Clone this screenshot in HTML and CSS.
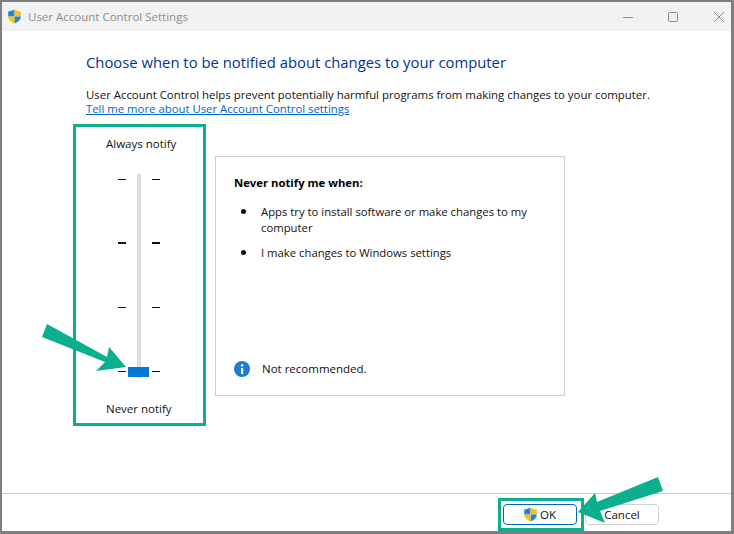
FILE: index.html
```html
<!DOCTYPE html>
<html lang="en">
<head>
<meta charset="utf-8">
<title>User Account Control Settings</title>
<link rel="stylesheet" href="styles.css">
</head>
<body>
<div class="window">
  <header class="titlebar">
    <svg class="shield title-shield" viewBox="0 0 16 16"><path d="M8 .6C6 1.900 4 2.500 1.300 2.600V8H8z" fill="#1c86d8"/><path d="M8 .6c2 1.300 4 1.900 6.700 2V8H8z" fill="#f6c21c"/><path d="M8 8h6.700c0 3.500-3 6-6.700 7.500z" fill="#1c86d8"/><path d="M1.300 8H8v7.500C4.300 14 1.300 11.500 1.300 8z" fill="#f6c21c"/></svg>
    <span class="title">User Account Control Settings</span>
    <div class="controls">
      <svg class="ctl" viewBox="0 0 10 10"><path d="M0 5.500h10" stroke="#8a8a8a" fill="none"/></svg>
      <svg class="ctl" viewBox="0 0 10 10"><rect x=".5" y=".5" width="9" height="9" rx="1" stroke="#8a8a8a" fill="none"/></svg>
      <svg class="ctl" viewBox="0 0 10 10"><path d="M0 0l10 10M10 0L0 10" stroke="#8a8a8a" fill="none"/></svg>
    </div>
  </header>
  <main class="content">
    <h1 class="heading">Choose when to be notified about changes to your computer</h1>
    <p class="intro">User Account Control helps prevent potentially harmful programs from making changes to your computer.</p>
    <a class="more" href="#">Tell me more about User Account Control settings</a>
    <div class="panels">
      <section class="slider-frame">
        <div class="slider-label">Always notify</div>
        <div class="slider">
          <div class="track"></div>
          <div class="ticks"><i></i><i></i></div>
          <div class="ticks bold"><i></i><i></i></div>
          <div class="ticks"><i></i><i></i></div>
          <div class="ticks"><i></i><i></i></div>
          <div class="thumb"></div>
        </div>
        <div class="slider-label">Never notify</div>
      </section>
      <section class="info">
        <h2 class="info-title">Never notify me when:</h2>
        <ul class="info-list">
          <li>Apps try to install software or make changes to my computer</li>
          <li>I make changes to Windows settings</li>
        </ul>
        <div class="note">
          <svg class="note-icon" viewBox="0 0 16 16"><circle cx="8" cy="8" r="8" fill="#1a7fd4"/><rect x="7" y="7" width="2.200" height="6" fill="#fff"/><rect x="7" y="3.300" width="2.200" height="2.200" fill="#fff"/></svg>
          <span>Not recommended.</span>
        </div>
      </section>
    </div>
  </main>
  <footer class="footer">
    <div class="ok-frame">
      <button class="btn ok" type="button">
        <svg class="shield" viewBox="0 0 16 16"><path d="M8 .6C6 1.900 4 2.500 1.300 2.600V8H8z" fill="#1c86d8"/><path d="M8 .6c2 1.300 4 1.900 6.700 2V8H8z" fill="#f6c21c"/><path d="M8 8h6.700c0 3.500-3 6-6.700 7.500z" fill="#1c86d8"/><path d="M1.300 8H8v7.500C4.300 14 1.300 11.500 1.300 8z" fill="#f6c21c"/></svg>
        <span>OK</span>
      </button>
    </div>
    <button class="btn cancel" type="button">Cancel</button>
  </footer>
  <svg class="arrow arrow-slider" viewBox="0 0 90 55"><path d="M7 4L67 37 69 27 86 47 56 51 65 42 2 17z" fill="#0bae8d"/></svg>
  <svg class="arrow arrow-ok" viewBox="0 0 90 52"><path d="M83 3L88 17 25 37 30 49 3 38 20 19 22 28z" fill="#0bae8d"/></svg>
</div>
</body>
</html>
```
FILE: styles.css
```css
* { box-sizing: border-box; }
html, body { margin: 0; padding: 0; }
body { width: 734px; height: 534px; overflow: hidden; background: #fff; font-family: "Open Sans", "Noto Sans", sans-serif; font-size: 11.5px; color: #111; }
.window { position: relative; width: 734px; height: 534px; display: flex; flex-direction: column; border: 2px solid #7f7f7f; border-right-width: 3px; border-bottom-width: 3px; background: #fff; }
.titlebar { height: 29px; flex: none; display: flex; align-items: center; background: #f2f2f2; padding-left: 5px; }
.shield { width: 15px; height: 15px; flex: none; }
.title { margin-left: 6px; color: #8c8c8c; font-size: 11.5px; }
.controls { margin-left: auto; display: flex; gap: 35px; padding-right: 7px; }
.ctl { width: 10px; height: 10px; }
.ctl:last-child { margin-left: 1px; }
.content { flex: 1; padding: 0 0 0 84px; }
.heading { margin: 21px 0 0; font-size: 14.830px; font-weight: 400; color: #003399; line-height: 21px; }
.intro { margin: 14px 0 0; font-size: 11.400px; line-height: 15px; }
.more { display: block; font-size: 11.350px; line-height: 14px; color: #0066cc; text-decoration: underline; }
.panels { display: flex; align-items: flex-start; margin: 8px 0 0 -13px; gap: 9px; }
.slider-frame { width: 133px; height: 302px; border: 3px solid #0bae8d; display: flex; flex-direction: column; padding: 9px 0 0 30px; }
.slider-label { line-height: 15px; }
.slider { position: relative; margin: 23px 0 22px 12px; width: 42px; height: 205px; display: flex; flex-direction: column; justify-content: space-between; padding: 5px 0 7px; }
.track { position: absolute; left: 19px; top: 0; width: 4px; height: 204px; background: #e2e2e2; border: 1px solid #d8d8d8; }
.ticks { display: flex; justify-content: space-between; }
.ticks i { width: 8px; height: 1px; background: #111; }
.ticks.bold { margin-top: -1px; }
.ticks.bold i { height: 2px; }
.thumb { position: absolute; left: 10px; top: 193px; width: 21px; height: 10px; background: #0078d7; }
.info { width: 350px; height: 240px; margin-top: 32px; border: 1px solid #cfcfcf; padding: 0 18px; display: flex; flex-direction: column; }
.info-title { margin: 18px 0 0; font-size: 11.300px; font-weight: 700; line-height: 16px; color: #000; }
.info-list { margin: 13px 0 0; padding: 0 0 0 27px; list-style: none; font-size: 11.300px; line-height: 16px; }
.info-list li { position: relative; margin-bottom: 9px; }
.info-list li::before { content: ""; position: absolute; left: -20px; top: 5px; width: 5px; height: 5px; border-radius: 50%; background: #111; }
.note { margin-top: auto; margin-bottom: 18px; display: flex; align-items: center; gap: 12px; line-height: 16px; }
.note-icon { width: 16px; height: 16px; }
.footer { height: 38px; flex: none; border-top: 1px solid #c9c9c9; display: flex; align-items: flex-start; justify-content: flex-end; padding: 4px 72px 0 0; }
.ok-frame { border: 3px solid #0bae8d; padding: 3px 4px 3px 2px; margin-right: 1px; }
.btn { width: 74px; height: 21px; padding: 0; border-radius: 4px; background: #fff; font: inherit; color: #111; display: flex; align-items: center; justify-content: center; }
.ok { border: 1px solid #0067c0; gap: 2px; padding-right: 1px; }
.cancel { margin-top: 6px; border: 1px solid #cfcfcf; }
.arrow { position: absolute; }
.arrow-slider { left: 38px; top: 318px; width: 90px; height: 55px; }
.arrow-ok { left: 573px; top: 472px; width: 90px; height: 52px; }
```
